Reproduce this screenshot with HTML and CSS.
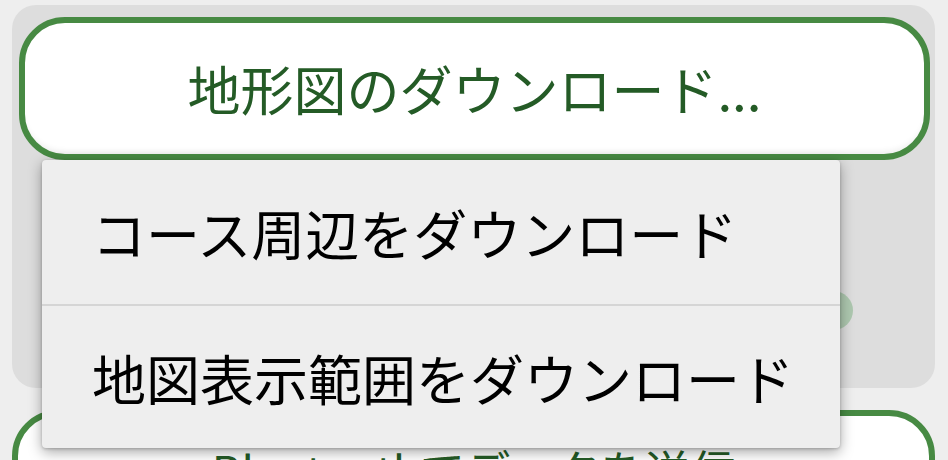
FILE: index.html
```html
<!DOCTYPE html>
<html lang="ja">
<head>
    <meta charset="UTF-8">
    <meta name="viewport" content="width=device-width, initial-scale=1.0">
    <title>地形図のダウンロード</title>
    <link rel="stylesheet" href="styles.css">
</head>
<body>
    <!-- Map download card -->
    <div class="card">
        <button class="outline-btn">地形図のダウンロード...</button>
        <div class="card-row">
            <span class="pill"></span>
        </div>
    </div>

    <!-- Bluetooth button, partly off screen -->
    <button class="outline-btn bottom-btn">Bluetoothでデータを送信</button>

    <!-- Popup menu opened from the download button -->
    <ul class="popup-menu">
        <li>コース周辺をダウンロード</li>
        <li>地図表示範囲をダウンロード</li>
    </ul>
</body>
</html>
```

FILE: styles.css
```css
body {
    font-family: "Noto Sans CJK JP", "Noto Sans", sans-serif;
    margin: 0;
    padding: 0;
    background-color: #eeeeee;
    height: 460px;
    overflow: hidden;
    position: relative;
}

.card {
    margin: 5px 13px 0 12px;
    height: 383px;
    box-sizing: border-box;
    padding: 12px 5px 0 7px;
    background-color: #dddddd;
    border-radius: 24px;
    display: flex;
    flex-direction: column;
}

.outline-btn {
    display: block;
    width: 100%;
    height: 143px;
    box-sizing: border-box;
    padding: 0;
    background-color: #fff;
    border: 6px solid #478a43;
    border-radius: 46px;
    color: #245b26;
    font-family: inherit;
    font-size: 53px;
    line-height: 1;
    text-align: center;
    box-shadow: inset 0 -6px 6px -4px rgba(0, 0, 0, 0.08);
}

.card-row {
    display: flex;
    justify-content: flex-end;
    padding-right: 77px;
    margin-top: 131px;
}

.pill {
    width: 160px;
    height: 39px;
    border-radius: 20px;
    background-color: #adc7af;
}

.bottom-btn {
    display: flex;
    justify-content: center;
    align-items: flex-start;
    margin: 22px 13px 0 12px;
    width: calc(100% - 25px);
    font-size: 45px;
    padding-top: 31px;
}

.popup-menu {
    position: absolute;
    top: 160px;
    left: 42px;
    width: 798px;
    margin: 0;
    padding: 0;
    list-style-type: none;
    background-color: #eeeeee;
    border-radius: 4px;
    box-shadow: 0 4px 14px rgba(0, 0, 0, 0.35), 0 1px 3px rgba(0, 0, 0, 0.2);
}

.popup-menu li {
    height: 144px;
    display: flex;
    align-items: center;
    padding-left: 50px;
    font-size: 54px;
    color: #000;
}

.popup-menu li + li {
    border-top: 2px solid #d5d5d5;
    height: 142px;
}
```
